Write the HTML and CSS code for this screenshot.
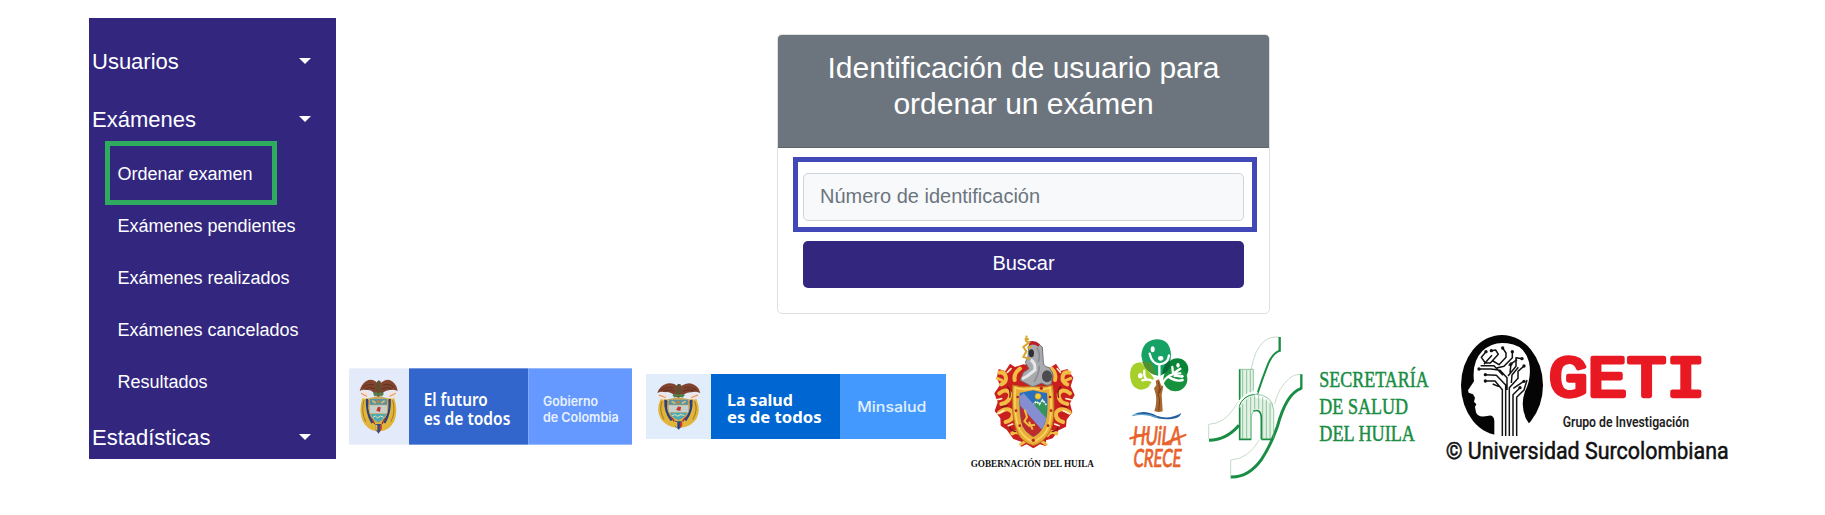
FILE: index.html
```html
<!DOCTYPE html>
<html lang="es">
<head>
<meta charset="utf-8">
<title>Ordenar examen</title>
<link rel="stylesheet" href="styles.css">
</head>
<body>
<div class="page">
  <nav class="sidebar">
    <a class="group">Usuarios<span class="caret"></span></a>
    <a class="group">Exámenes<span class="caret"></span></a>
    <div class="submenu">
      <a class="item marked">Ordenar examen</a>
      <a class="item">Exámenes pendientes</a>
      <a class="item">Exámenes realizados</a>
      <a class="item">Exámenes cancelados</a>
      <a class="item">Resultados</a>
    </div>
    <a class="group">Estadísticas<span class="caret"></span></a>
  </nav>
  <main class="main">
    <section class="card">
      <h1 class="card-title">Identificación de usuario para ordenar un exámen</h1>
      <form class="card-body">
        <div class="field"><input class="input" type="text" placeholder="Número de identificación"></div>
        <button class="button" type="button">Buscar</button>
      </form>
    </section>
    <footer class="logos">
      <svg class="logo banner" width="300" height="95" viewBox="0 0 900 285">
        <defs>
          <g id="arms">
            <path d="M8 58Q-4 96 9 126Q24 154 50 157H64Q90 154 104 126Q116 96 104 58Z" fill="#e0b53a"/>
            <path d="M13 64Q3 96 18 128M99 64Q109 96 94 128" stroke="#a87a20" stroke-width="3" fill="none"/>
            <path d="M22 60Q20 102 38 132M90 60Q92 102 74 132" stroke="#29417f" stroke-width="7" fill="none"/>
            <path d="M28 64Q28 106 45 135M84 64Q84 106 67 135" stroke="#a92f35" stroke-width="4" fill="none"/>
            <path d="M28 58L56 50L84 58L86 88Q84 119 56 134Q28 119 26 88Z" fill="#c8a85b"/>
            <path d="M31 60H81L82 77H30Z" fill="#5b93a5"/>
            <path d="M30 79H82V103H31Z" fill="#c5cfcc"/>
            <path d="M33 105H79Q72 122 56 130Q40 122 33 105Z" fill="#49a9b5"/>
            <circle cx="56" cy="68" r="5" fill="#b98545"/>
            <path d="M38 65L48 72M65 72L75 65" stroke="#d9c16a" stroke-width="5"/>
            <path d="M55 83L63 85L61 99L50 95Z" fill="#c7322d"/>
            <path d="M39 116L47 111L54 117L62 111L72 115" stroke="#e8e3bb" stroke-width="3" fill="none"/>
            <path d="M0 36Q5 12 26 3Q44-1 53 13L56 4L64 11Q83-5 99 8Q111 17 114 36Q101 30 91 33Q74 34 67 46L56 53L45 46Q37 32 22 33Q10 30 0 36Z" fill="#81452f"/>
            <path d="M9 26Q22 13 43 18M15 30Q30 21 46 30M104 26Q91 13 70 18M98 30Q83 21 67 30" stroke="#5f3022" stroke-width="3" fill="none"/>
            <path d="M50 12Q55 0 63 7L61 16L65 33L57 42L49 33Z" fill="#5e5030"/>
            <path d="M40 44Q51 35 56 44Q61 35 73 44L67 52L56 47L45 52Z" fill="#4c824d"/>
            <path d="M2 40L12 35L27 41L28 52L15 60L5 53ZM110 40L100 35L87 41L84 52L97 60L107 53Z" fill="#f5e3d8"/>
            <path d="M4 43L22 52M108 43L90 52" stroke="#d98a68" stroke-width="3"/>
            <path d="M47 135H65V150L57 164L48 153Z" fill="#294986"/>
            <path d="M47 137H53V157L47 150Z" fill="#e6b934"/><path d="M60 137H66V150L60 159Z" fill="#c3373b"/>
          </g>
        </defs>
        <rect x="27" y="25" width="180" height="229" fill="#e3ebfb"/>
        <rect x="207" y="25" width="358" height="229" fill="#3366cc"/>
        <rect x="565" y="25" width="311" height="229" fill="#6699ff"/>
        <use href="#arms" transform="translate(59 57)"/>
        <g class="banner-slogan">
          <text x="251" y="137" textLength="192" lengthAdjust="spacingAndGlyphs">El futuro</text>
          <text x="251" y="196" textLength="260" lengthAdjust="spacingAndGlyphs">es de todos</text>
        </g>
        <g class="banner-owner">
          <text x="609" y="139" textLength="165" lengthAdjust="spacingAndGlyphs">Gobierno</text>
          <text x="609" y="187" textLength="227" lengthAdjust="spacingAndGlyphs">de Colombia</text>
        </g>
      </svg>
      <svg class="logo banner" width="310" height="95" viewBox="0 0 930 285">
        <rect x="18" y="42" width="195" height="195" fill="#e2edfc"/>
        <rect x="213" y="42" width="389" height="195" fill="#0066d2"/>
        <rect x="602" y="42" width="316" height="195" fill="#4499ff"/>
        <use href="#arms" transform="translate(52 68) scale(1.13 .86)"/>
        <g class="banner-health">
          <text x="261" y="139" textLength="198" lengthAdjust="spacingAndGlyphs">La salud</text>
          <text x="261" y="188" textLength="284" lengthAdjust="spacingAndGlyphs">es de todos</text>
        </g>
        <text class="banner-ministry" x="652" y="156" textLength="207" lengthAdjust="spacingAndGlyphs">Minsalud</text>
      </svg>
      <svg class="logo crest" width="150" height="155" viewBox="0 0 450 465">
        <path d="M190 118L165 126L150 116L136 138L116 132L110 160L120 180L103 205L113 232L104 258L121 280L122 302L140 314L160 342L184 350L182 366L200 358L220 370L240 358L258 364L258 346L278 340L296 316L318 305L320 284L337 262L330 235L344 210L332 184L340 158L322 132L302 138L288 116L270 128Z" fill="#c9201f"/>
        <g fill="none" stroke="#f3bd45" stroke-width="12" stroke-linecap="round">
          <path d="M118 143Q132 139 137 154Q141 172 124 178M180 131Q160 145 164 165M118 205Q142 187 151 208Q150 232 124 237M118 262Q145 243 158 263Q162 285 137 291M157 325Q172 315 184 330"/>
          <path d="M328 143Q312 139 308 154Q305 172 322 178M275 131Q290 145 285 165M330 205Q306 187 296 208Q295 232 322 237M329 262Q302 243 288 263Q284 285 309 291M289 325Q274 315 262 330"/>
          <path d="M112 160L126 166M332 160L318 166M182 358L202 346M258 358L240 346" stroke-width="9"/>
        </g>
        <g fill="none" stroke="#fff1cf" stroke-width="5" stroke-linecap="round">
          <path d="M142 142L153 131M108 225L125 221M131 257L112 266M145 302L158 297M301 142L292 131M336 225L318 221M310 257L328 266M297 302L284 297"/>
        </g>
        <g fill="none" stroke="#7f1516" stroke-width="4">
          <path d="M142 184Q154 197 149 218M123 246L143 242M148 305Q154 318 169 320M303 184Q289 197 296 218M322 246L301 242M296 305Q290 318 275 320"/>
        </g>
        <path d="M158 180Q190 190 218 182Q248 190 278 180Q290 292 266 326Q248 354 220 362Q188 352 174 326Q152 284 158 180Z" fill="#e9ad35" stroke="#b9691f" stroke-width="3"/>
        <path d="M166 188Q190 197 218 190Q246 197 270 188Q280 284 259 318Q245 340 220 350Q194 340 181 318Q160 280 166 188Z" fill="none" stroke="#f8d361" stroke-width="5"/>
        <path d="M179 204Q200 200 220 196Q242 202 261 204Q267 274 250 306Q240 326 220 335Q199 325 188 304Q175 270 179 204Z" fill="#2870bd"/>
        <path d="M216 240L228 224L236 234L246 222L261 244L258 283Z" fill="#36955b"/>
        <path d="M216 241L230 229L238 238L248 225L259 240" fill="none" stroke="#eef7ed" stroke-width="5" stroke-dasharray="7 3"/>
        <path d="M181 225L247 310Q237 328 220 335Q200 325 188 304Q179 280 181 225Z" fill="#bd2b2b"/>
        <path d="M179 214L191 205L259 280L250 306L244 313L181 242Z" fill="#858ed1"/>
        <circle cx="234" cy="214" r="9" fill="#f4d035" stroke="#ce902c" stroke-width="2"/>
        <path d="M194 254L201 276L193 289L207 302L225 299M207 290L218 314" fill="none" stroke="#edbd42" stroke-width="6"/>
        <g fill="#b52421"><circle cx="173" cy="216" r="4"/><circle cx="168" cy="257" r="4"/><circle cx="179" cy="302" r="4"/><circle cx="220" cy="346" r="5"/><circle cx="264" cy="302" r="4"/><circle cx="273" cy="257" r="4"/><circle cx="270" cy="216" r="4"/><circle cx="244" cy="190" r="5"/></g>
        <path d="M206 62Q228 47 247 66L250 112Q250 125 268 128L278 144L274 176Q261 186 246 174L218 185L181 166L190 143L207 131L196 112L204 96Z" fill="#a8aaae" stroke="#717478" stroke-width="3"/>
        <path d="M212 105Q226 111 225 135L202 153L186 162" fill="none" stroke="#e6e7e9" stroke-width="9"/>
        <path d="M230 68Q243 83 235 111M238 122Q238 145 222 171" fill="none" stroke="#8b8d92" stroke-width="5"/>
        <ellipse cx="261" cy="154" rx="15" ry="18" fill="#4b4b50"/><ellipse cx="214" cy="85" rx="8" ry="12" fill="#302f33"/>
        <path d="M205 51Q222 42 240 58L235 65Q220 53 208 62Z" fill="#b8212b"/>
        <path d="M200 32L198 48L207 53L190 66L199 79L190 96L209 102M207 43L194 43M202 69L216 64" fill="none" stroke="#d9a72e" stroke-width="6"/>
        <text class="crest-name" x="32" y="427" textLength="370" lengthAdjust="spacingAndGlyphs">GOBERNACIÓN DEL HUILA</text>
      </svg>
      <svg class="logo tree" width="90" height="155" viewBox="0 0 270 465">
        <path d="M60 143Q64 111 93 112L132 160L115 187Q92 201 74 187Q60 174 60 143Z" fill="#a6cf29"/>
        <circle cx="202" cy="133" r="33" fill="#078437"/>
        <circle cx="196" cy="163" r="36" fill="#16913e"/>
        <path d="M94 91Q98 46 139 43Q181 42 183 90Q181 141 148 154Q100 143 94 91Z" fill="#16a264"/>
        <path d="M156 148Q160 112 181 107Q183 121 175 135Q167 147 156 148Z" fill="#086b37"/>
        <path d="M96 110Q114 108 126 116L138 151Q109 143 96 110Z" fill="#51922f"/>
        <g fill="none" stroke="#fff" stroke-width="7" stroke-linecap="round" stroke-linejoin="round">
          <path d="M119 86Q126 116 148 118Q174 116 177 91M148 119V178"/>
          <path d="M97 166Q120 158 135 175M103 137Q101 155 109 162"/>
          <path d="M158 174Q174 143 211 145M187 126L189 146L211 131M177 156Q196 171 218 165M194 153Q201 151 209 154"/>
        </g>
        <g fill="#fff"><ellipse cx="128" cy="73" rx="6" ry="9"/><ellipse cx="152" cy="100" rx="8" ry="7"/><ellipse cx="91" cy="152" rx="7" ry="8"/><ellipse cx="204" cy="121" rx="5" ry="7"/><ellipse cx="215" cy="154" rx="6" ry="5"/></g>
        <path d="M133 258Q142 232 137 207L132 190L139 181L137 167L147 163L153 181L160 184L155 209L158 259Q146 264 133 258Z" fill="#a8672e"/>
        <path d="M145 170L149 190L144 205L149 225L146 257M153 189L148 204" fill="none" stroke="#73401f" stroke-width="3"/>
        <path d="M68 269Q101 252 140 272Q177 286 214 264Q210 280 185 282Q151 285 123 273Q96 263 68 269Z" fill="#225e9c"/>
        <path d="M67 272Q105 262 142 278" fill="none" stroke="#5ba4cf" stroke-width="4"/>
        <text class="tree-huila" transform="translate(66 360) skewX(-6) scale(1 1.12)" textLength="146" lengthAdjust="spacingAndGlyphs">HUiLA</text>
        <path d="M61 340L115 325M172 352L226 330" stroke="#e8632c" stroke-width="7" stroke-linecap="round"/>
        <text class="tree-crece" transform="translate(68 426) skewX(-6) scale(1 1.12)" textLength="144" lengthAdjust="spacingAndGlyphs">CRECE</text>
      </svg>
      <svg class="logo health" width="240" height="155" viewBox="0 0 720 465">
        <path d="M117 133H160V215L218 232V341H185V282Q184 257 168 257Q154 258 154 282V343H117Z" fill="#e4f2e6"/>
        <g fill="none" stroke="#a9caae" stroke-width="2">
          <path d="M26 298Q73 296 103 248Q119 220 142 206M154 132Q163 76 191 50Q211 32 239 37M92 405Q145 402 178 345M224 238Q235 188 267 161Q285 145 306 149"/>
          <path d="M26 298V342M92 405V453"/>
        </g>
        <g fill="none" stroke="#188d43">
          <path d="M27 346Q78 346 117 301M92 456Q145 458 184 404Q211 364 233 302Q259 205 304 190" stroke-width="9"/>
          <path d="M172 207Q188 157 205 115Q219 84 239 77" stroke-width="6"/>
          <path d="M239 36V80M304 148V193" stroke-width="7"/>
          <path d="M119 133V225M119 247V343H154M184 343H218M160 258Q184 250 184 282V343" stroke-width="5"/>
          <path d="M117 245Q128 212 164 208" stroke-width="3"/>
        </g>
        <g fill="none" stroke="#5fae78" stroke-width="2">
          <path d="M117 133H160V197M154 343V282Q154 258 168 257M164 208Q215 207 221 254V341M128 135V219M140 135V210M151 135V203M128 237V341M140 224V341M152 216V341M164 211V252M176 211V252M188 216V341M199 223V341M210 235V341"/>
        </g>
        <path d="M112 240Q132 204 160 203H173" stroke="#fff" stroke-width="5" fill="none"/>
        <g class="health-name">
          <text x="358" y="187" textLength="328" lengthAdjust="spacingAndGlyphs">SECRETARÍA</text>
          <text x="358" y="267" textLength="266" lengthAdjust="spacingAndGlyphs">DE SALUD</text>
          <text x="358" y="349" textLength="287" lengthAdjust="spacingAndGlyphs">DEL HUILA</text>
        </g>
      </svg>
      <svg class="logo geti" width="310" height="155" viewBox="0 0 930 465">
        <ellipse cx="201" cy="181" rx="123" ry="151" fill="#050505"/>
        <path d="M178 340V287Q176 270 161 272Q128 280 123 262L120 246L124 238L117 230L120 218L114 208L101 203L99 196L117 169Q110 111 142 78Q175 48 217 55Q269 60 282 111Q291 158 270 199Q255 242 273 281L291 310L248 340Z" fill="#fff"/>
        <g fill="none" stroke="#111" stroke-width="4.5" stroke-linejoin="round">
          <path d="M202 333V194L180 168H151M212 333V180L184 151L151 149M223 333V188L249 160V139L267 123M234 333V209L255 188M245 333V217L267 195L276 165M216 195V158L195 136L168 132H132M219 153L243 124V98L261 101M229 174L231 150L250 127M190 184L173 177M204 151L177 122H137M225 143L228 117M235 190L266 169"/>
          <path d="M153 80L139 97L151 114H166L190 88L182 75L169 77M174 108L192 119L213 97V84L203 69M185 129L207 124L232 98V80M147 118L158 105L171 91M221 122L246 104"/>
        </g>
        <g fill="#111"><circle cx="151" cy="168" r="5"/><circle cx="151" cy="149" r="5"/><circle cx="132" cy="132" r="5"/><circle cx="267" cy="123" r="5"/><circle cx="261" cy="101" r="5"/><circle cx="255" cy="188" r="5"/><circle cx="153" cy="80" r="5"/><circle cx="203" cy="69" r="5"/><circle cx="232" cy="80" r="5"/><circle cx="169" cy="77" r="5"/><circle cx="228" cy="117" r="5"/><circle cx="267" cy="169" r="5"/></g>
        <text class="geti-name" x="341" y="214" textLength="470" lengthAdjust="spacingAndGlyphs">GETI</text>
        <text class="geti-group" x="383" y="305" textLength="379" lengthAdjust="spacingAndGlyphs">Grupo de Investigación</text>
        <text class="geti-owner" x="32" y="402" textLength="849" lengthAdjust="spacingAndGlyphs">© Universidad Surcolombiana</text>
      </svg>
    </footer>
  </main>
</div>
</body>
</html>
```
FILE: styles.css
```css
*, *::after { box-sizing: border-box; }
body { margin: 0; background: #fff; font-family: "Liberation Sans", Arial, sans-serif; overflow: hidden; }
.page { display: flex; gap: 4px; height: 515px; padding: 18px 0 0 89px; }

.sidebar { flex: none; width: 247px; height: 441px; padding-top: 15px; overflow: hidden; background: #32267f; color: #fff; }
.group { display: flex; align-items: center; justify-content: space-between; height: 58px; padding: 0 25px 0 3px; font-size: 22px; }
.caret { margin-bottom: 2px; border: 6.5px solid transparent; border-top: 6.5px solid #fff; border-bottom: 0; }
.submenu { height: 260px; }
.item { display: flex; align-items: center; position: relative; height: 52px; padding: 0 0 1px 28.5px; font-size: 18px; }
.marked::after { content: ""; position: absolute; left: 16px; top: -8px; width: 172px; height: 64px; border: 5px solid #2eab5e; }

.main { flex: none; width: 1405px; padding-top: 16px; }
.card { width: 493px; height: 280px; margin-left: 437px; border: 1px solid #dfdfdf; border-radius: 5px; background: #fff; }
.card-title { height: 113px; margin: 0; padding: 15px 25px 0; border-bottom: 1px solid #5e646c; border-radius: 4px 4px 0 0; background: #6c757d; color: #fff; font-size: 30px; font-weight: 400; line-height: 36px; text-align: center; }
.card-body { display: flex; flex-direction: column; gap: 20px; padding: 25px 25px; }
.field { position: relative; height: 48px; }
.field::after { content: ""; position: absolute; left: -10px; top: -16px; width: 464px; height: 75px; border: 5px solid #4149b8; pointer-events: none; }
.input { display: block; width: 100%; height: 48px; padding: 0 16px 1px; border: 1px solid #ced4da; border-radius: 5px; background: #f8f9fb; font: 20px "Liberation Sans", Arial, sans-serif; }
.input::placeholder { color: #6c757d; opacity: 1; }
.button { height: 47px; padding: 0 0 2px; border: 0; border-radius: 5px; background: #32267f; color: #fff; font: 20px "Liberation Sans", Arial, sans-serif; }

.logos { display: flex; align-items: flex-start; margin-top: 11px; }
.logo { flex: none; display: block; overflow: visible; }
.banner { margin-top: 35px; }
.crest { margin-left: 10px; }
.geti { margin-left: -5px; }

.banner-slogan { fill: #fff; font: 600 56px "Noto Sans", sans-serif; }
.banner-owner { fill: #e8f2ff; font: 600 39px Inter, sans-serif; }
.banner-health { fill: #fff; font: 700 49px "Noto Sans", sans-serif; }
.banner-ministry { fill: #e3f1ff; font: 500 43px Inter, sans-serif; }
.crest-name { fill: #111; font: 700 32px "Liberation Serif", serif; }
.tree-huila { fill: #e8632c; stroke: #e8632c; stroke-width: 2; font: 500 70px Lato, sans-serif; }
.tree-crece { fill: #e8632c; stroke: #e8632c; stroke-width: 2; font: 500 67px Lato, sans-serif; }
.health-name { fill: #188d43; stroke: #188d43; stroke-width: 1.5; font: 68px "Liberation Serif", serif; }
.geti-name { fill: #e81923; stroke: #e81923; stroke-width: 13; stroke-linejoin: round; font: 400 172px "Liberation Mono", monospace; }
.geti-group { fill: #222; font: 600 45px Roboto, sans-serif; }
.geti-owner { fill: #111; stroke: #111; stroke-width: 1.5; font: 400 69px Roboto, sans-serif; }
```
